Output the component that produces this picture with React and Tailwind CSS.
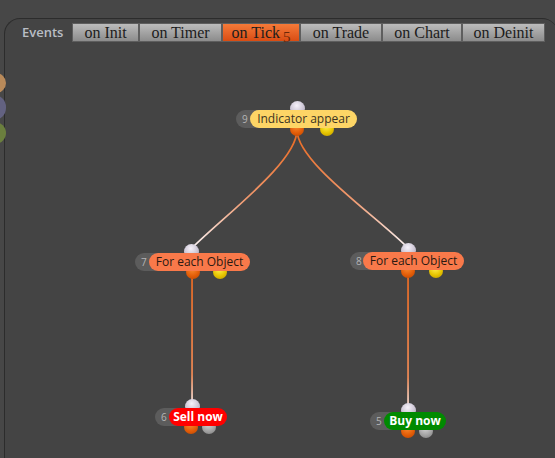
import React from "react"

const tabs = [
    { label: "on Init", w: "w-[67px]" },
    { label: "on Timer", w: "w-[83px]" },
    { label: "on Tick", w: "w-[78px]", active: true },
    { label: "on Trade", w: "w-[82px]" },
    { label: "on Chart", w: "w-[80px]" },
    { label: "on Deinit", w: "w-[83px]" },
]

// page coordinates of the nodes on the canvas
const nodes = [
    { n: 9, gx: 236, mx: 250, w: 107, y: 110, label: "Indicator appear", pill: "bg-[#fdd566] text-[#3b3322] font-normal", input: 297, outs: [[297, "orange"], [327, "yellow"]] },
    { n: 7, gx: 135, mx: 149, w: 101, y: 253, label: "For each Object", pill: "bg-[#f9794a] text-[#2a1a12] font-normal", input: 191, outs: [[193, "orange"], [220, "yellow"]] },
    { n: 8, gx: 350, mx: 363, w: 101, y: 252, label: "For each Object", pill: "bg-[#f9794a] text-[#2a1a12] font-normal", input: 408, outs: [[408, "orange"], [436, "yellow"]] },
    { n: 6, gx: 155, mx: 169, w: 58, y: 408, label: "Sell now", pill: "bg-[#ff0000] text-white font-bold", input: 192, outs: [[191, "orange"], [209, "grey"]] },
    { n: 5, gx: 370, mx: 384, w: 62, y: 412, label: "Buy now", pill: "bg-[#008a00] text-white font-bold", input: 408, outs: [[408, "orange"], [426, "grey"]] },
]

const dot = {
    input: "bg-[radial-gradient(circle_at_45%_30%,#f6f2fa,#c9c2d2_55%,#9c94a6)]",
    orange: "bg-[radial-gradient(circle_at_45%_30%,#f88a30,#e35d08_55%,#b84400)]",
    yellow: "bg-[radial-gradient(circle_at_45%_30%,#fff050,#e6c400_55%,#b89400)]",
    grey: "bg-[radial-gradient(circle_at_45%_30%,#d4d4d4,#a4a4a4_55%,#7a7a7a)]",
}

function Node({ node }) {
    return (
        <div className="absolute h-[18px]" style={{ left: node.gx, top: node.y }}>
            <div className={`absolute top-[-9px] w-[15px] h-[15px] rounded-full ${dot.input}`} style={{ left: node.input - node.gx - 7 }} />
            {node.outs.map(([cx, kind], i) => (
                <div key={i} className={`absolute top-[12px] w-[14px] h-[14px] rounded-full ${dot[kind]}`} style={{ left: cx - node.gx - 7 }} />
            ))}
            <div className="absolute left-0 top-0 h-[18px] w-[30px] rounded-full bg-[#5c5c5c] text-[#b4b4b4] text-[10px] leading-[18px] pl-[6px] font-['Open_Sans',sans-serif]">
                {node.n}
            </div>
            <div className={`absolute top-0 h-[18px] rounded-full flex items-center justify-center text-[12px] leading-none font-['Open_Sans',sans-serif] ${node.pill}`} style={{ left: node.mx - node.gx, width: node.w }}>
                {node.label}
            </div>
        </div>
    )
}

function App() {
    return (
        <div className="relative w-[555px] h-[458px] overflow-hidden bg-[#474747]">
            <div className="pt-[18px] pl-[4px] h-full">
                <div className="h-full w-[554px] rounded-t-[16px] border-t border-l border-[#2c2c2c] bg-[#444444]">
                    <div className="flex items-center pl-[17px] pt-[4px]">
                        <span className="w-[50px] text-[13px] font-semibold text-[#b9bec4] font-['Open_Sans',sans-serif]">Events</span>
                        {tabs.map(t => (
                            <div key={t.label} className={`h-[19px] ${t.w} flex items-center justify-center border border-[#5e5e5e] text-[16px] leading-none text-[#1c1c1c] font-['Liberation_Serif',serif] ${t.active ? "bg-gradient-to-b from-[#f57a38] to-[#d94c12]" : "bg-gradient-to-b from-[#bcbcbc] to-[#8c8c8c]"}`}>
                                {t.label}
                                {t.active && <span className="relative top-[5px] ml-[3px] text-[15px] leading-none text-[#6a2808]">5</span>}
                            </div>
                        ))}
                    </div>
                </div>
            </div>

            <div className="absolute left-[-18px] top-[73px] flex flex-col items-end gap-[2px]">
                <div className="w-[22px] h-[20px] rounded-full bg-[#b98a5a]" />
                <div className="w-[24px] h-[25px] rounded-full bg-[#636281]" />
                <div className="w-[22px] h-[22px] rounded-full bg-[#6b7f3e]" />
            </div>

            <div className="absolute inset-0">
                <svg width="555" height="458" className="absolute left-0 top-0">
                    <defs>
                        <linearGradient id="gl" gradientUnits="userSpaceOnUse" x1="297" y1="130" x2="192" y2="248">
                            <stop offset="0" stopColor="#ea6a22" />
                            <stop offset="0.55" stopColor="#f09a70" />
                            <stop offset="1" stopColor="#fbf4f6" />
                        </linearGradient>
                        <linearGradient id="gr" gradientUnits="userSpaceOnUse" x1="297" y1="130" x2="408" y2="248">
                            <stop offset="0" stopColor="#ea6a22" />
                            <stop offset="0.55" stopColor="#f09a70" />
                            <stop offset="1" stopColor="#fbf4f6" />
                        </linearGradient>
                        <linearGradient id="gv" gradientUnits="objectBoundingBox" x1="0" y1="0" x2="0" y2="1">
                            <stop offset="0" stopColor="#ea6a22" />
                            <stop offset="0.75" stopColor="#f08a55" />
                            <stop offset="1" stopColor="#fbf4f6" />
                        </linearGradient>
                    </defs>
                    <path d="M297,130 C297,162 225,215 192,248" fill="none" stroke="url(#gl)" strokeWidth="1.7" />
                    <path d="M297,130 C297,162 375,215 408,248" fill="none" stroke="url(#gr)" strokeWidth="1.7" />
                    <rect x="191.2" y="274" width="1.7" height="134" fill="url(#gv)" />
                    <rect x="407.2" y="273" width="1.7" height="139" fill="url(#gv)" />
                </svg>
                {nodes.map(node => <Node key={node.n} node={node} />)}
            </div>
        </div>
    )
}

export default App
